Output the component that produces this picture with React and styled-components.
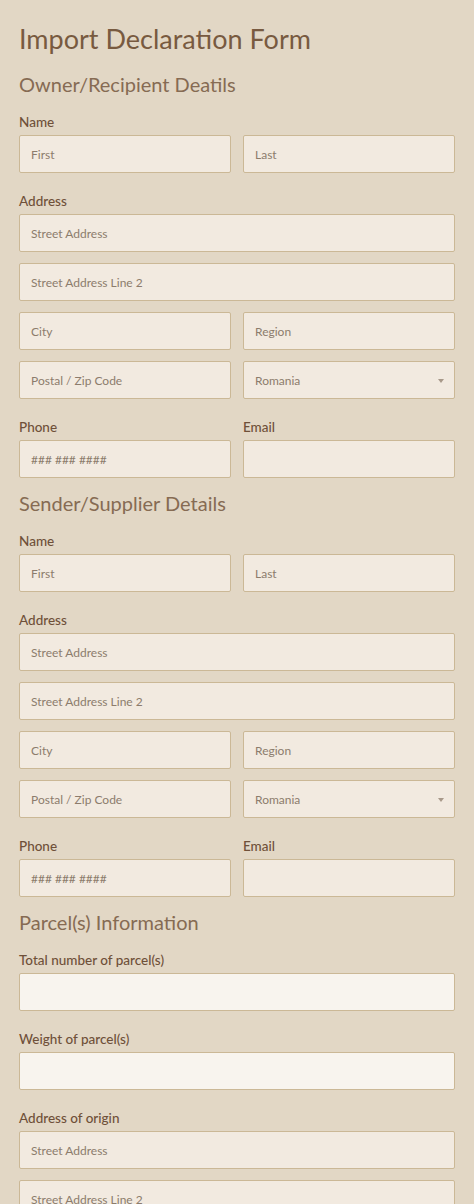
import styled, { createGlobalStyle } from 'styled-components';

const GlobalStyle = createGlobalStyle`
  html, body {
    margin: 0;
    padding: 0;
    background: #e2d7c5;
  }
  body {
    font-family: Lato, "Noto Sans", sans-serif;
  }
  * { box-sizing: border-box; }
`;

const Page = styled.div`
  padding: 23px 19px 0;
  height: 1204px;
  overflow: hidden;
`;

const Title = styled.h1`
  margin: 0 0 17px;
  font-size: 27px;
  line-height: 32px;
  font-weight: 400;
  color: #785a40;
`;

const Section = styled.section`
  display: flex;
  flex-direction: column;
  gap: 19px;
  margin-bottom: 13px;
`;

const SectionTitle = styled.h2`
  margin: 0 0 -2px;
  font-size: 20px;
  line-height: 24px;
  font-weight: 400;
  color: #866b53;
`;

const Row = styled.div`
  display: grid;
  grid-template-columns: ${(p) => (p.$cols === 2 ? '1fr 1fr' : '1fr')};
  column-gap: 12px;
  row-gap: 11px;
`;

const Wide = styled.div`
  grid-column: 1 / -1;
`;

const Label = styled.div`
  font-size: 13.5px;
  line-height: 18px;
  color: #6f5039;
  font-weight: 500;
  margin-bottom: 4px;
`;

const Input = styled.div`
  position: relative;
  height: 38px;
  border: 1px solid #cbb896;
  border-radius: 2px;
  background: ${(p) => (p.$light ? '#f8f4ee' : '#f2eae0')};
  display: flex;
  align-items: center;
  padding: 0 11px;
  font-size: 12px;
  color: #8c7c6c;
`;

const Arrow = styled.span`
  position: absolute;
  right: 10px;
  top: 17px;
  width: 0;
  height: 0;
  border-left: 3px solid transparent;
  border-right: 3px solid transparent;
  border-top: 4px solid #a8998a;
`;

const Box = ({ text, select, light }) => (
  <Input $light={light}>
    {text}
    {select && <Arrow />}
  </Input>
);

const ContactSection = ({ title }) => (
  <Section>
    <SectionTitle>{title}</SectionTitle>
    <div>
      <Label>Name</Label>
      <Row $cols={2}>
        <Box text="First" />
        <Box text="Last" />
      </Row>
    </div>
    <div>
      <Label>Address</Label>
      <Row $cols={2}>
        <Wide>
          <Box text="Street Address" />
        </Wide>
        <Wide>
          <Box text="Street Address Line 2" />
        </Wide>
        <Box text="City" />
        <Box text="Region" />
        <Box text="Postal / Zip Code" />
        <Box text="Romania" select />
      </Row>
    </div>
    <Row $cols={2}>
      <div>
        <Label>Phone</Label>
        <Box text="### ### ####" />
      </div>
      <div>
        <Label>Email</Label>
        <Box />
      </div>
    </Row>
  </Section>
);

const App = () => (
  <>
    <GlobalStyle />
    <Page>
      <Title>Import Declaration Form</Title>
      <ContactSection title="Owner/Recipient Deatils" />
      <ContactSection title="Sender/Supplier Details" />
      <Section>
        <SectionTitle>Parcel(s) Information</SectionTitle>
        <div>
          <Label>Total number of parcel(s)</Label>
          <Box light />
        </div>
        <div>
          <Label>Weight of parcel(s)</Label>
          <Box light />
        </div>
        <div>
          <Label>Address of origin</Label>
          <Row>
            <Box text="Street Address" />
            <Box text="Street Address Line 2" />
          </Row>
        </div>
      </Section>
    </Page>
  </>
);

export default App;
